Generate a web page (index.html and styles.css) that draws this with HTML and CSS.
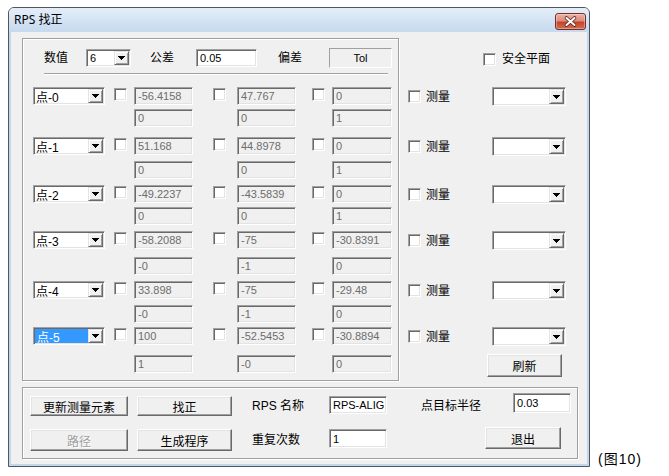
FILE: index.html
```html
<!DOCTYPE html>
<html lang="zh-CN">
<head>
<meta charset="utf-8">
<title>RPS 找正</title>
<link rel="stylesheet" href="styles.css">
</head>
<body>
<div class="page">
  <div class="window">
    <div class="titlebar">
      <span class="title">RPS 找正</span>
      <div class="close"><svg width="29" height="15" viewBox="0 0 29 15"><path d="M10.5 4 L18.5 11 M18.5 4 L10.5 11" stroke="#5a241c" stroke-width="3.6" stroke-linecap="round"/><path d="M10.5 4 L18.5 11 M18.5 4 L10.5 11" stroke="#fff" stroke-width="2" stroke-linecap="round"/></svg></div>
    </div>
    <div class="client">
      <div class="upper">
        <div class="group main-group">
          <div class="hdr">
            <span class="lbl h1">数值</span>
            <div class="combo c-num"><div class="cf">6</div><div class="cbtn"><svg width="7" height="4" viewBox="0 0 7 4"><path d="M0 0H7L3.5 4Z" fill="#000"/></svg></div></div>
            <span class="lbl h2">公差</span>
            <div class="edit w61">0.05</div>
            <span class="lbl h3">偏差</span>
            <div class="tol">Tol</div>
          </div>
          <div class="sep"></div>
          <div class="rows">
            <div class="prow pgrid">
              <div class="combo c-pt"><div class="cf">点-0</div><div class="cbtn"><svg width="7" height="4" viewBox="0 0 7 4"><path d="M0 0H7L3.5 4Z" fill="#000"/></svg></div></div>
              <span class="chk"></span><div class="edit ro w59">-56.4158</div>
              <span class="chk"></span><div class="edit ro w59">47.767</div>
              <span class="chk"></span><div class="edit ro w60">0</div>
              <div class="edit ro w59 s1">0</div><div class="edit ro w59 s2">0</div><div class="edit ro w60 s3">1</div>
            </div>
            <div class="prow pgrid">
              <div class="combo c-pt"><div class="cf">点-1</div><div class="cbtn"><svg width="7" height="4" viewBox="0 0 7 4"><path d="M0 0H7L3.5 4Z" fill="#000"/></svg></div></div>
              <span class="chk"></span><div class="edit ro w59">51.168</div>
              <span class="chk"></span><div class="edit ro w59">44.8978</div>
              <span class="chk"></span><div class="edit ro w60">0</div>
              <div class="edit ro w59 s1">0</div><div class="edit ro w59 s2">0</div><div class="edit ro w60 s3">1</div>
            </div>
            <div class="prow pgrid">
              <div class="combo c-pt"><div class="cf">点-2</div><div class="cbtn"><svg width="7" height="4" viewBox="0 0 7 4"><path d="M0 0H7L3.5 4Z" fill="#000"/></svg></div></div>
              <span class="chk"></span><div class="edit ro w59">-49.2237</div>
              <span class="chk"></span><div class="edit ro w59">-43.5839</div>
              <span class="chk"></span><div class="edit ro w60">0</div>
              <div class="edit ro w59 s1">0</div><div class="edit ro w59 s2">0</div><div class="edit ro w60 s3">1</div>
            </div>
            <div class="prow pgrid">
              <div class="combo c-pt"><div class="cf">点-3</div><div class="cbtn"><svg width="7" height="4" viewBox="0 0 7 4"><path d="M0 0H7L3.5 4Z" fill="#000"/></svg></div></div>
              <span class="chk"></span><div class="edit ro w59">-58.2088</div>
              <span class="chk"></span><div class="edit ro w59">-75</div>
              <span class="chk"></span><div class="edit ro w60">-30.8391</div>
              <div class="edit ro w59 s1">-0</div><div class="edit ro w59 s2">-1</div><div class="edit ro w60 s3">0</div>
            </div>
            <div class="prow pgrid">
              <div class="combo c-pt"><div class="cf">点-4</div><div class="cbtn"><svg width="7" height="4" viewBox="0 0 7 4"><path d="M0 0H7L3.5 4Z" fill="#000"/></svg></div></div>
              <span class="chk"></span><div class="edit ro w59">33.898</div>
              <span class="chk"></span><div class="edit ro w59">-75</div>
              <span class="chk"></span><div class="edit ro w60">-29.48</div>
              <div class="edit ro w59 s1">-0</div><div class="edit ro w59 s2">-1</div><div class="edit ro w60 s3">0</div>
            </div>
            <div class="prow pgrid">
              <div class="combo c-pt"><div class="cf sel">点-5</div><div class="cbtn"><svg width="7" height="4" viewBox="0 0 7 4"><path d="M0 0H7L3.5 4Z" fill="#000"/></svg></div></div>
              <span class="chk"></span><div class="edit ro w59">100</div>
              <span class="chk"></span><div class="edit ro w59">-52.5453</div>
              <span class="chk"></span><div class="edit ro w60">-30.8894</div>
              <div class="edit ro w59 s1">1</div><div class="edit ro w59 s2">-0</div><div class="edit ro w60 s3">0</div>
            </div>
          </div>
        </div>
        <div class="side">
          <div class="side-top"><span class="chk"></span><span class="lbl safe">安全平面</span></div>
          <div class="rows">
            <div class="prow"><div class="srow"><span class="chk"></span><span class="lbl slbl">测量</span><div class="combo c-side"><div class="cf"></div><div class="cbtn"><svg width="7" height="4" viewBox="0 0 7 4"><path d="M0 0H7L3.5 4Z" fill="#000"/></svg></div></div></div></div>
            <div class="prow"><div class="srow"><span class="chk"></span><span class="lbl slbl">测量</span><div class="combo c-side"><div class="cf"></div><div class="cbtn"><svg width="7" height="4" viewBox="0 0 7 4"><path d="M0 0H7L3.5 4Z" fill="#000"/></svg></div></div></div></div>
            <div class="prow"><div class="srow"><span class="chk"></span><span class="lbl slbl">测量</span><div class="combo c-side"><div class="cf"></div><div class="cbtn"><svg width="7" height="4" viewBox="0 0 7 4"><path d="M0 0H7L3.5 4Z" fill="#000"/></svg></div></div></div></div>
            <div class="prow"><div class="srow"><span class="chk"></span><span class="lbl slbl">测量</span><div class="combo c-side"><div class="cf"></div><div class="cbtn"><svg width="7" height="4" viewBox="0 0 7 4"><path d="M0 0H7L3.5 4Z" fill="#000"/></svg></div></div></div></div>
            <div class="prow"><div class="srow"><span class="chk"></span><span class="lbl slbl">测量</span><div class="combo c-side"><div class="cf"></div><div class="cbtn"><svg width="7" height="4" viewBox="0 0 7 4"><path d="M0 0H7L3.5 4Z" fill="#000"/></svg></div></div></div></div>
            <div class="prow"><div class="srow"><span class="chk"></span><span class="lbl slbl">测量</span><div class="combo c-side"><div class="cf"></div><div class="cbtn"><svg width="7" height="4" viewBox="0 0 7 4"><path d="M0 0H7L3.5 4Z" fill="#000"/></svg></div></div></div>
              <button class="btn refresh">刷新</button>
            </div>
          </div>
        </div>
      </div>
      <div class="group bottom-group">
        <div class="brow brow1">
          <button class="btn b-update">更新测量元素</button>
          <button class="btn b-align">找正</button>
          <span class="lbl b-lbl">RPS 名称</span>
          <div class="edit w58 e-name">RPS-ALIG</div>
          <span class="lbl b-lbl2">点目标半径</span>
          <div class="edit w58 e-rad">0.03</div>
        </div>
        <div class="brow brow2">
          <button class="btn b-update b-dis">路径</button>
          <button class="btn b-align">生成程序</button>
          <span class="lbl b-lbl">重复次数</span>
          <div class="edit w58 e-rep">1</div>
          <button class="btn b-exit">退出</button>
        </div>
      </div>
    </div>
  </div>
  <div class="caption">(图10)</div>
</div>
</body>
</html>
```

FILE: styles.css
```css
* { box-sizing: border-box; }
body {
  margin: 0;
  background: #fff;
  font-family: "Liberation Sans", "Noto Sans CJK SC", sans-serif;
  font-size: 11px;
  color: #000;
}
.page { display: flex; align-items: flex-end; padding: 7px 0 0 8px; }

.window {
  flex: none;
  width: 582px;
  height: 460px;
  border: 1px solid #50565e;
  border-radius: 6px 6px 0 0;
  background: #c2d7ed;
  display: flex;
  flex-direction: column;
}
.titlebar {
  flex: none;
  height: 24px;
  display: flex;
  align-items: flex-start;
  padding-left: 5px;
  background: linear-gradient(#e4eef9, #c6d9ee);
  border-radius: 5px 5px 0 0;
}
.title {
  font-family: "Noto Sans", "Noto Sans CJK SC", sans-serif;
  font-size: 12px;
  line-height: 23px;
}
.close {
  margin: 5px 3px 0 auto;
  width: 31px;
  height: 17px;
  border: 1px solid #7b2c22;
  border-radius: 3px;
  background: linear-gradient(#ebb2a6 0%, #dc8c7b 45%, #c5432d 55%, #d06c54 100%);
  box-shadow: inset 0 0 0 1px rgba(255,255,255,0.35);
  display: flex;
  align-items: center;
  justify-content: center;
}
.close svg { display: block; }

.client {
  flex: 1;
  margin: 0 2px 2px;
  background: #f0f0f0;
  padding: 6px 0 0 11px;
}
.upper { display: flex; }

.group {
  border: 1px solid #a0a0a0;
  box-shadow: inset 1px 1px #fff, 1px 1px #fff;
}
.main-group { flex: none; width: 377px; height: 343px; padding-top: 9px; }

.lbl { font-size: 12px; line-height: 14px; white-space: nowrap; }

.hdr { display: flex; align-items: center; height: 20px; }
.h1 { margin-left: 21px; width: 42px; }
.h2 { margin-left: 19px; width: 46px; }
.h3 { margin-left: 21px; width: 51px; }

.sep {
  margin: 5px 0 0 21px;
  width: 344px;
  height: 2px;
  border-top: 1px solid #a0a0a0;
  border-bottom: 1px solid #fff;
}
.main-group .rows { margin-top: 12px; }

.rows > .prow:nth-child(1) { height: 50px; }
.rows > .prow:nth-child(2) { height: 48px; }
.rows > .prow:nth-child(3) { height: 46px; }
.rows > .prow:nth-child(4) { height: 50px; }
.rows > .prow:nth-child(5) { height: 46px; }

.pgrid {
  display: grid;
  grid-template-columns: 91px 20px 79px 24px 75px 20px 60px;
  grid-template-rows: 18px 18px;
  justify-items: start;
  align-items: start;
}
.pgrid:nth-child(1) { row-gap: 4px; }
.pgrid:nth-child(2) { row-gap: 6px; }
.pgrid:nth-child(3) { row-gap: 4px; }
.pgrid:nth-child(4) { row-gap: 8px; }
.pgrid:nth-child(5) { row-gap: 6px; }
.pgrid:nth-child(6) { row-gap: 10px; }
.pgrid .chk { margin-top: 1px; }
.s1 { grid-column: 3; grid-row: 2; }
.s2 { grid-column: 5; grid-row: 2; }
.s3 { grid-column: 7; grid-row: 2; }

/* controls */
.edit {
  height: 18px;
  display: flex;
  align-items: center;
  padding-left: 3px;
  border: 1px solid;
  border-color: #a0a0a0 #fff #fff #a0a0a0;
  box-shadow: inset 1px 1px #696969, inset -1px -1px #e3e3e3;
  background: #fff;
  font-size: 11px;
  white-space: nowrap;
  overflow: hidden;
}
.ro { background: #f0f0f0; color: #6d6d6d; }
.w58 { width: 58px; }
.w59 { width: 59px; }
.w60 { width: 60px; }
.w61 { width: 61px; }

.chk {
  display: block;
  flex: none;
  width: 13px;
  height: 13px;
  border: 1px solid;
  border-color: #a0a0a0 #fff #fff #a0a0a0;
  box-shadow: inset 1px 1px #696969, inset -1px -1px #e3e3e3;
  background: #fff;
}

.combo {
  display: flex;
  height: 18px;
  padding: 1px;
  border: 1px solid;
  border-color: #a0a0a0 #fff #fff #a0a0a0;
  box-shadow: inset 1px 1px #696969, inset -1px -1px #e3e3e3;
  background: #fff;
}
.cf {
  flex: 1;
  display: flex;
  align-items: center;
  padding-left: 1px;
  font-size: 12px;
  white-space: nowrap;
}
.cf.sel { background: #3399ff; color: #fff; padding-left: 2px; }
.cbtn {
  flex: none;
  width: 15px;
  display: flex;
  align-items: center;
  justify-content: center;
  background: #f0f0f0;
  border: 1px solid;
  border-color: #e3e3e3 #696969 #696969 #e3e3e3;
  box-shadow: inset 1px 1px #fff, inset -1px -1px #a0a0a0;
}
.cbtn svg { display: block; shape-rendering: crispEdges; }
.c-num { width: 45px; }
.c-num .cf { font-size: 11px; padding-left: 2px; }
.c-pt { width: 72px; margin-left: 10px; }
.c-side { width: 74px; height: 19px; }

.tol {
  width: 63px;
  height: 20px;
  display: flex;
  align-items: center;
  justify-content: center;
  border: 1px solid;
  border-color: #a0a0a0 #fff #fff #a0a0a0;
  background: #f0f0f0;
  font-size: 11px;
}

/* right side */
.side { flex: 1; }
.side-top { height: 49px; padding: 15px 0 0 84px; display: flex; align-items: flex-start; }
.safe { margin-left: 6px; line-height: 13px; }
.srow { display: flex; align-items: center; height: 19px; }
.srow .chk { margin-left: 9px; }
.slbl { margin-left: 5px; width: 66px; }

.btn {
  display: flex;
  align-items: center;
  justify-content: center;
  padding: 0;
  font-family: inherit;
  font-size: 12px;
  color: #000;
  background: #f0f0f0;
  border: 1px solid;
  border-color: #fff #696969 #696969 #fff;
  box-shadow: inset -1px -1px #a0a0a0, inset 1px 1px #e3e3e3;
  border-radius: 0;
}
.refresh { margin: 8px 0 0 88px; width: 75px; height: 23px; }

/* bottom */
.bottom-group { margin-top: 6px; width: 556px; height: 72px; padding-top: 5px; }
.brow { display: flex; align-items: flex-start; }
.brow1 { height: 23px; }
.brow2 { height: 25px; margin-top: 11px; }
.b-update { margin-left: 7px; width: 98px; }
.b-align { margin-left: 9px; width: 95px; }
.brow1 .btn { margin-top: 3px; height: 20px; }
.brow2 .btn { margin-top: 2px; height: 22px; }
.b-lbl { margin-left: 20px; width: 77px; }
.brow1 .b-lbl { margin-top: 3px; line-height: 20px; }
.brow2 .b-lbl { margin-top: 2px; line-height: 22px; }
.e-name { margin-top: 3px; height: 18px; }
.b-lbl2 { margin-left: 34px; width: 92px; margin-top: 3px; line-height: 20px; }
.e-rad { height: 20px; }
.e-rep { margin-top: 2px; height: 19px; }
.brow2 .b-exit { margin-left: 98px; margin-top: 0; width: 76px; height: 22px; }
.b-dis { color: #a0a0a0; text-shadow: 1px 1px #fff; }

.caption {
  margin-left: 8px;
  margin-bottom: 0;
  font-size: 14px;
  line-height: 16px;
  letter-spacing: 1px;
  white-space: nowrap;
}
```
